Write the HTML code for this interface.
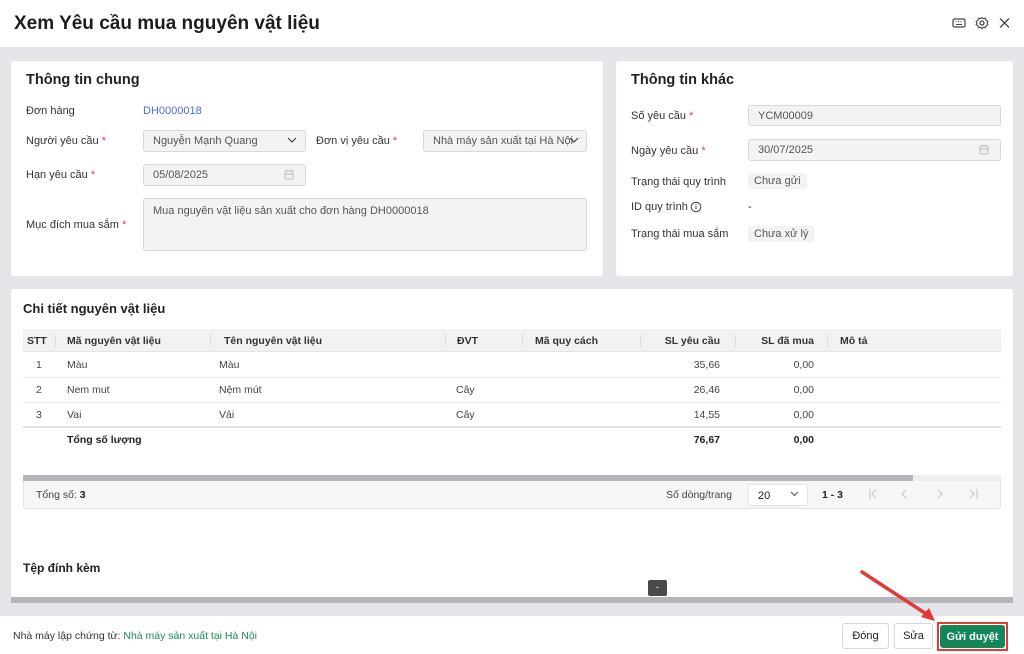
<!DOCTYPE html>
<html><head><meta charset="utf-8">
<style>
*{box-sizing:border-box;margin:0;padding:0}
body{width:1024px;height:654px;overflow:hidden;background:#e5e6ea;font-family:"Liberation Sans","Noto Sans CJK SC",sans-serif;color:#222;font-size:11px;position:relative}
.abs{position:absolute}
.hdr{left:0;top:0;width:1024px;height:47px;background:#fff}
.title{left:14px;top:13px;font-size:19px;font-weight:bold;color:#1d1d1f}
.card{background:#fff;border-radius:3px}
.h2{font-size:14.5px;font-weight:bold;color:#222}
.lbl{font-size:11px;color:#333}
.req{color:#e0394a}
.inp{background:#f2f3f5;border:1px solid #d6d8dc;border-radius:3px;color:#555;font-size:11px;padding-left:9px;display:flex;align-items:center}
.tag{background:#f2f3f5;border-radius:2px;color:#555;font-size:11px;padding:2px 6px}
.th{top:329px;height:23px;background:#f1f2f4;border-bottom:1px solid #e2e4e8}
.cell{font-size:10.5px;color:#444}
.row{height:25px;border-bottom:1px solid #e6e8eb;left:23px;width:978px}
.btn{border:1px solid #d6d8dc;border-radius:3px;background:#fff;font-size:11px;display:flex;align-items:center;justify-content:center}
</style></head><body>
<div class="abs hdr"></div>
<div class="abs title">Xem Yêu cầu mua nguyên vật liệu</div>
<svg class="abs" style="left:951px;top:16px" width="60" height="14" viewBox="0 0 60 14">
<rect x="2" y="3" width="12" height="8" rx="1.5" fill="none" stroke="#444" stroke-width="1.2"/>
<path d="M4.5 5.5h1M7 5.5h1M9.5 5.5h1M5 8.5h6" stroke="#444" stroke-width="1"/>
<circle cx="31" cy="7" r="2" fill="none" stroke="#444" stroke-width="1.2"/>
<path d="M31 1.5l1.5 1.3 2-.5.6 2 1.8 1-.8 1.7.8 1.7-1.8 1-.6 2-2-.5L31 12.5l-1.5-1.3-2 .5-.6-2-1.8-1 .8-1.7-.8-1.7 1.8-1 .6-2 2 .5z" fill="none" stroke="#444" stroke-width="1.1"/>
<path d="M49 2.5l9 9M58 2.5l-9 9" stroke="#444" stroke-width="1.3"/>
</svg>

<div class="abs card" style="left:11px;top:61px;width:592px;height:215px"></div>
<div class="abs h2" style="left:26px;top:72px">Thông tin chung</div>
<div class="abs lbl" style="left:26px;top:105px">Đơn hàng</div>
<div class="abs" style="left:143px;top:105px;color:#4a6fdc">DH0000018</div>
<div class="abs lbl" style="left:26px;top:135px">Người yêu cầu <span class="req">*</span></div>
<div class="abs inp" style="left:143px;top:130px;width:163px;height:22px">Nguyễn Mạnh Quang</div>
<svg class="abs" style="left:287px;top:137px" width="10" height="7"><path d="M1 1l4 4 4-4" fill="none" stroke="#444" stroke-width="1.2"/></svg>
<div class="abs lbl" style="left:316px;top:135px">Đơn vị yêu cầu <span class="req">*</span></div>
<div class="abs inp" style="left:423px;top:130px;width:164px;height:22px;white-space:nowrap;overflow:hidden">Nhà máy sản xuất tại Hà Nội</div>
<svg class="abs" style="left:569px;top:137px" width="10" height="7"><path d="M1 1l4 4 4-4" fill="none" stroke="#444" stroke-width="1.2"/></svg>
<div class="abs lbl" style="left:26px;top:169px">Hạn yêu cầu <span class="req">*</span></div>
<div class="abs inp" style="left:143px;top:164px;width:163px;height:22px">05/08/2025</div>
<svg class="abs" style="left:284px;top:169px" width="10" height="11"><rect x="1" y="2" width="8" height="8" rx="1" fill="none" stroke="#bbb"/><path d="M1 5h8M3 0.5v2M7 0.5v2" stroke="#bbb"/></svg>
<div class="abs lbl" style="left:26px;top:219px">Mục đích mua sắm <span class="req">*</span></div>
<div class="abs inp" style="left:143px;top:198px;width:444px;height:53px;align-items:flex-start;padding-top:6px">Mua nguyên vật liệu sản xuất cho đơn hàng DH0000018</div>

<div class="abs card" style="left:616px;top:61px;width:397px;height:215px"></div>
<div class="abs h2" style="left:631px;top:72px">Thông tin khác</div>
<div class="abs lbl" style="left:631px;top:110px">Số yêu cầu <span class="req">*</span></div>
<div class="abs inp" style="left:748px;top:105px;width:253px;height:21px">YCM00009</div>
<div class="abs lbl" style="left:631px;top:145px">Ngày yêu cầu <span class="req">*</span></div>
<div class="abs inp" style="left:748px;top:139px;width:253px;height:22px">30/07/2025</div>
<svg class="abs" style="left:979px;top:144px" width="10" height="11"><rect x="1" y="2" width="8" height="8" rx="1" fill="none" stroke="#bbb"/><path d="M1 5h8M3 0.5v2M7 0.5v2" stroke="#bbb"/></svg>
<div class="abs lbl" style="left:631px;top:176px">Trạng thái quy trình</div>
<div class="abs tag" style="left:748px;top:173px">Chưa gửi</div>
<div class="abs lbl" style="left:631px;top:201px">ID quy trình</div>
<svg class="abs" style="left:690px;top:201px" width="12" height="12"><circle cx="6" cy="6" r="4.8" fill="none" stroke="#444"/><path d="M6 5v3.5M6 3.2v.8" stroke="#444"/></svg>
<div class="abs" style="left:748px;top:201px">-</div>
<div class="abs lbl" style="left:631px;top:228px">Trạng thái mua sắm</div>
<div class="abs tag" style="left:748px;top:226px">Chưa xử lý</div>

<div class="abs card" style="left:11px;top:289px;width:1002px;height:312px;border-radius:3px 3px 0 0"></div>
<div class="abs h2" style="left:23px;top:301px;font-size:13px">Chi tiết nguyên vật liệu</div>
<div class="abs th" style="left:23px;width:978px"></div>
<div class="abs" style="left:55px;top:334px;width:1px;height:13px;background:#dcdee2"></div>
<div class="abs" style="left:210px;top:334px;width:1px;height:13px;background:#dcdee2"></div>
<div class="abs" style="left:445px;top:334px;width:1px;height:13px;background:#dcdee2"></div>
<div class="abs" style="left:522px;top:334px;width:1px;height:13px;background:#dcdee2"></div>
<div class="abs" style="left:640px;top:334px;width:1px;height:13px;background:#dcdee2"></div>
<div class="abs" style="left:735px;top:334px;width:1px;height:13px;background:#dcdee2"></div>
<div class="abs" style="left:827px;top:334px;width:1px;height:13px;background:#dcdee2"></div>
<div class="abs cell" style="top:335px;left:27px;font-weight:bold;color:#333">STT</div>
<div class="abs cell" style="top:335px;left:67px;font-weight:bold;color:#333">Mã nguyên vật liệu</div>
<div class="abs cell" style="top:335px;left:224px;font-weight:bold;color:#333">Tên nguyên vật liệu</div>
<div class="abs cell" style="top:335px;left:457px;font-weight:bold;color:#333">ĐVT</div>
<div class="abs cell" style="top:335px;left:535px;font-weight:bold;color:#333">Mã quy cách</div>
<div class="abs cell" style="top:335px;left:620px;width:100px;text-align:right;font-weight:bold;color:#333">SL yêu cầu</div>
<div class="abs cell" style="top:335px;left:714px;width:100px;text-align:right;font-weight:bold;color:#333">SL đã mua</div>
<div class="abs cell" style="top:335px;left:840px;font-weight:bold;color:#333">Mô tả</div>

<div class="abs row" style="top:353px"></div>
<div class="abs row" style="top:378px"></div>
<div class="abs row" style="top:403px;border-bottom:2px solid #e2e4e8"></div>
<div class="abs cell" style="top:359px;left:36px">1</div><div class="abs cell" style="top:359px;left:67px">Màu</div><div class="abs cell" style="top:359px;left:219px">Màu</div><div class="abs cell" style="top:359px;left:620px;width:100px;text-align:right">35,66</div><div class="abs cell" style="top:359px;left:714px;width:100px;text-align:right">0,00</div>
<div class="abs cell" style="top:384px;left:36px">2</div><div class="abs cell" style="top:384px;left:67px">Nem mut</div><div class="abs cell" style="top:384px;left:219px">Nệm mút</div><div class="abs cell" style="top:384px;left:456px">Cây</div><div class="abs cell" style="top:384px;left:620px;width:100px;text-align:right">26,46</div><div class="abs cell" style="top:384px;left:714px;width:100px;text-align:right">0,00</div>
<div class="abs cell" style="top:409px;left:36px">3</div><div class="abs cell" style="top:409px;left:67px">Vai</div><div class="abs cell" style="top:409px;left:219px">Vải</div><div class="abs cell" style="top:409px;left:456px">Cây</div><div class="abs cell" style="top:409px;left:620px;width:100px;text-align:right">14,55</div><div class="abs cell" style="top:409px;left:714px;width:100px;text-align:right">0,00</div>
<div class="abs cell" style="top:434px;left:67px;font-weight:bold;color:#222">Tổng số lượng</div><div class="abs cell" style="top:434px;left:620px;width:100px;text-align:right;font-weight:bold;color:#222">76,67</div><div class="abs cell" style="top:434px;left:714px;width:100px;text-align:right;font-weight:bold;color:#222">0,00</div>

<div class="abs" style="left:23px;top:475px;width:978px;height:6px;background:#eceef0"></div>
<div class="abs" style="left:23px;top:475px;width:890px;height:6px;background:#b4b6ba"></div>
<div class="abs" style="left:23px;top:481px;width:978px;height:28px;background:#f5f6f7;border:1px solid #e2e4e8;border-top:none;border-radius:0 0 3px 3px"></div>
<div class="abs cell" style="left:36px;top:489px;color:#444">Tổng số: <b style="color:#222">3</b></div>
<div class="abs cell" style="left:666px;top:489px;color:#444">Số dòng/trang</div>
<div class="abs" style="left:748px;top:484px;width:60px;height:22px;background:#fff;border:1px solid #e2e4e8;border-radius:3px;font-size:11px;padding:5px 0 0 9px">20</div>
<svg class="abs" style="left:790px;top:491px" width="9" height="6"><path d="M1 1l3.5 3.5L8 1" fill="none" stroke="#555"/></svg>
<div class="abs cell" style="left:822px;top:489px;font-weight:bold;color:#222">1 - 3</div>
<svg class="abs" style="left:866px;top:488px" width="115" height="12" fill="none" stroke="#c4c6ca" stroke-width="1.1">
<path d="M4 1v10M10 2L6 6l4 4"/>
<path d="M40 2l-4 4 4 4"/>
<path d="M72 2l4 4-4 4"/>
<path d="M104 2l4 4-4 4M111 1v10"/>
</svg>

<div class="abs" style="left:23px;top:561px;font-size:12px;font-weight:bold">Tệp đính kèm</div>
<div class="abs" style="left:648px;top:580px;width:19px;height:16px;background:#4a4a4a;border-radius:2px;color:#fff;font-size:9px;text-align:center;line-height:15px">-</div>
<div class="abs" style="left:11px;top:597px;width:1002px;height:6px;background:#b4b6ba"></div>

<div class="abs" style="left:0;top:616px;width:1024px;height:38px;background:#fff"></div>
<div class="abs" style="left:13px;top:630px;font-size:10.5px;color:#333">Nhà máy lập chứng từ: <span style="color:#1e8a5a">Nhà máy sản xuất tại Hà Nội</span></div>
<div class="abs btn" style="left:842px;top:623px;width:47px;height:26px">Đóng</div>
<div class="abs btn" style="left:894px;top:623px;width:39px;height:26px">Sửa</div>
<div class="abs" style="left:937px;top:622px;width:71px;height:29px;border:2px solid #e53935"></div>
<div class="abs btn" style="left:940px;top:625px;width:65px;height:23px;background:#14875a;border-color:#14875a;color:#fff;font-weight:bold">Gửi duyệt</div>
<svg class="abs" style="left:855px;top:565px" width="85" height="60"><path d="M7 7L76 52" stroke="#e53935" stroke-width="3.5" stroke-linecap="round"/><path d="M80 56L66 52L74 43z" fill="#e53935"/></svg>
</body></html>
